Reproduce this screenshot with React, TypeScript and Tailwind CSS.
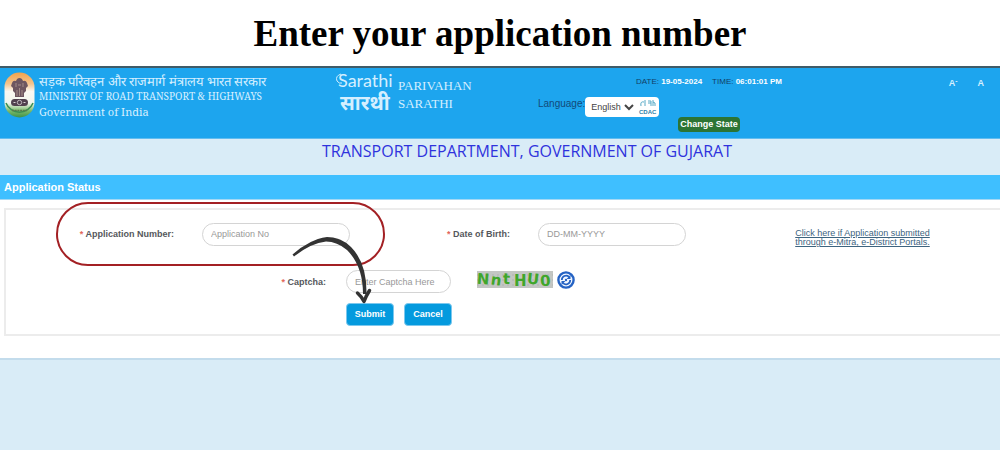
import { useState } from "react";

function Emblem() {
  return (
    <svg viewBox="0 0 31 46" className="h-[46px] w-[31px] shrink-0" aria-label="Emblem of India">
      <defs>
        <linearGradient id="tricolour" x1="0" y1="0" x2="0" y2="1">
          <stop offset="0" stopColor="#f2a24a" />
          <stop offset="0.25" stopColor="#f3c48e" />
          <stop offset="0.42" stopColor="#fbf8f2" />
          <stop offset="0.68" stopColor="#f1f6ee" />
          <stop offset="0.85" stopColor="#7dbb6b" />
          <stop offset="1" stopColor="#3f9148" />
        </linearGradient>
      </defs>
      <rect x="0.5" y="0.5" width="30" height="45" rx="15" fill="url(#tricolour)" />
      <path d="M2 31 A14.5 14.5 0 0 0 29 31" fill="none" stroke="#3c8f52" strokeWidth="1.5" />
      {/* lions */}
      <path
        d="M8 11 Q9 8 12 9 Q13 6 15.500 6 Q18 6 19 9 Q22 8 23 11 L24 14 L22 16 L22 19 L20 21 L20 25 L11 25 L11 21 L9 19 L9 16 L7 14 Z"
        fill="#6d5660"
      />
      <path d="M12 11 v4 M19 11 v4 M14 13 h3 M13 18 v6 M18 18 v6 M15.500 16 v8" stroke="#b39a93" strokeWidth="0.800" />
      {/* abacus and wheel */}
      <rect x="7" y="27" width="17" height="7" rx="3.500" fill="#51414f" />
      <circle cx="15.500" cy="30.500" r="2.200" fill="none" stroke="#d9d2d6" strokeWidth="0.800" />
      <path d="M9.500 30.500 h2 M19.500 30.500 h2" stroke="#d9d2d6" strokeWidth="1" />
      <path d="M8 38.500 h15" stroke="#5c7a4c" strokeWidth="1.500" strokeDasharray="2 0.700" />
    </svg>
  );
}

function SarathiLogo() {
  return (
    <svg viewBox="0 0 58 42" className="h-[42px] w-[58px] shrink-0 overflow-visible" fill="#d5efff">
      <text x="2" y="15" fontSize="18" fontFamily="Lato, sans-serif">
        Sarathi
      </text>
      <text x="4" y="38" fontSize="20" fontWeight="700" fontFamily="'Noto Sans', 'Noto Sans Devanagari', sans-serif">
        सारथी
      </text>
      <path d="M5 2 Q-1 4 1 9 Q3 12 6 11" fill="none" stroke="#d5efff" strokeWidth="1" />
    </svg>
  );
}

function CdacLogo() {
  return (
    <svg viewBox="0 0 18 16" className="h-4 w-[18px] overflow-visible">
      <path d="M2 7 Q1 2 5 3 M6 1 v6 M9 2 h3 v5 M9 4 h3 M14 1 v6 M14 3 q3 0 2 4" fill="none" stroke="#58aac6" strokeWidth="1" />
      <text x="0" y="15" fontSize="6" fontWeight="700" fontFamily="'Liberation Sans', sans-serif" fill="#2b7fa8">
        CDAC
      </text>
    </svg>
  );
}

const captchaGlyphs = [
  { char: "N", x: 0, y: 13, turn: 4 },
  { char: "n", x: 14, y: 14, turn: 8 },
  { char: "t", x: 26, y: 13, turn: 2 },
  { char: "H", x: 37, y: 15, turn: 0 },
  { char: "U", x: 50, y: 13, turn: 6 },
  { char: "0", x: 63, y: 15, turn: -4 },
];

function CaptchaImage() {
  return (
    <svg viewBox="0 0 76 17" className="h-[17px] w-[76px] shrink-0 overflow-visible">
      <rect width="76" height="17" fill="#c3c6c3" />
      <path d="M0 4 H76 M0 9 H76 M0 14 H76" stroke="#afb3af" strokeWidth="1" strokeDasharray="2 3" />
      {captchaGlyphs.map((g) => (
        <text
          key={g.x}
          x={g.x}
          y={g.y}
          transform={`rotate(${g.turn} ${g.x + 5} ${g.y - 6})`}
          fontSize="15"
          fontWeight="700"
          fontFamily="'DejaVu Sans', sans-serif"
          fill="#3fa62b"
        >
          {g.char}
        </text>
      ))}
    </svg>
  );
}

function RefreshIcon() {
  return (
    <svg viewBox="0 0 18 18" className="size-[18px]">
      <circle cx="9" cy="9" r="7.600" fill="#f3f8ff" stroke="#2563c4" strokeWidth="2.400" />
      <path d="M4.800 9 A4.300 4.300 0 0 1 12 5.800 M13.200 9 A4.300 4.300 0 0 1 6 12.200" fill="none" stroke="#2563c4" strokeWidth="1.800" />
      <path d="M13.500 3.800 V8 H9.600 Z M4.500 14.200 V10 H8.400 Z" fill="#2563c4" />
      <circle cx="9" cy="9" r="1.200" fill="#2563c4" />
    </svg>
  );
}

function Arrow() {
  return (
    <svg viewBox="0 0 84 72" className="pointer-events-none absolute top-6 left-[284px] h-[72px] w-[84px]">
      <path
        d="M2.500 20.500 Q20 5 37 3 Q51 3 61 13 Q77 29 76.500 60 L73 60 Q73 32 57 16 Q47 7.500 36 7.500 Q21 9 4 22.500 Z"
        fill="#333333"
      />
      <path d="M67.500 59 Q71 62 74 67.500 Q76 62 79.500 56.500" fill="none" stroke="#333333" strokeWidth="3.500" strokeLinecap="round" strokeLinejoin="round" />
    </svg>
  );
}

function FieldLabel({ htmlFor, children }: { htmlFor: string; children: string }) {
  return (
    <label htmlFor={htmlFor} className="text-right text-[9px] leading-4 font-bold whitespace-nowrap text-[#55575c]">
      <span className="text-[#e2665a]">* </span>
      {children}
    </label>
  );
}

const fieldClass =
  "h-[23px] rounded-full border border-[#d4d4d4] bg-white px-2 text-[9px] text-gray-700 placeholder-[#999999] focus:outline-none";
const buttonClass =
  "h-[23px] w-12 rounded-sm border border-[#7cc8ee] bg-[#049ade] text-[9px] font-bold text-white";

export default function App() {
  const [applicationNo, setApplicationNo] = useState("");
  const [birthDate, setBirthDate] = useState("");
  const [captcha, setCaptcha] = useState("");

  return (
    <div className="min-h-screen bg-[#d9ecf7] font-['Liberation_Sans',Arial,sans-serif]">
      <h1 className="bg-white pt-[10px] pb-2 text-center font-['Liberation_Serif',serif] text-[37px] leading-[48px] font-bold text-black">
        Enter your application number
      </h1>

      <header className="grid h-[73px] grid-cols-[33%_20%_1fr_auto] border-t-2 border-b border-t-[#3f5b68] border-b-[#62bdf0] bg-[#1da5ee]">
        <div className="flex items-start gap-1 pt-1 pl-1">
          <Emblem />
          <div className="pt-[2px] font-['Noto_Serif','Liberation_Serif',serif] leading-[15px] whitespace-nowrap text-[#d5efff]">
            <p className="text-[13px]">सड़क परिवहन और राजमार्ग मंत्रालय भारत सरकार</p>
            <p className="text-[10px]">MINISTRY OF ROAD TRANSPORT &amp; HIGHWAYS</p>
            <p className="text-[11px]">Government of India</p>
          </div>
        </div>

        <div className="flex items-start gap-1 pt-1 pl-[6px]">
          <SarathiLogo />
          <div className="pt-[5px] font-['Liberation_Serif',serif] text-[13px] leading-[18px] text-[#d5efff]">
            <p>PARIVAHAN</p>
            <p>SARATHI</p>
          </div>
        </div>

        <div className="pt-2 pl-2">
          <p className="flex gap-[10px] pl-[98px] text-[8px] leading-3 whitespace-nowrap text-[#123f66]">
            <span>
              DATE: <b className="font-bold text-white">19-05-2024</b>
            </span>
            <span>
              TIME: <b className="font-bold text-white">06:01:01 PM</b>
            </span>
          </p>
          <div className="mt-[9px] flex items-start">
            <label htmlFor="language" className="text-[10px] leading-[14px] text-[#124a78]">
              Language:
            </label>
            <span className="flex h-5 items-center gap-[2px] rounded-sm bg-white px-[2px]">
              <select id="language" className="h-4 w-[50px] bg-white text-[9px] text-[#444444]">
                <option>English</option>
                <option>हिन्दी</option>
              </select>
              <CdacLogo />
            </span>
          </div>
          <button className="ml-[140px] block h-[15px] w-[62px] rounded-sm bg-[#2c7434] text-[9px] leading-[15px] font-bold text-white">
            Change State
          </button>
        </div>

        <div className="flex gap-5 pt-2 pr-4 text-[9px] leading-[14px] font-bold text-[#d5efff]">
          <button className="self-start">
            A<sup>-</sup>
          </button>
          <button className="self-start">A</button>
        </div>
      </header>

      <h2 className="h-9 pl-[54px] text-center font-['Open_Sans',sans-serif] text-base leading-6 text-[#2f33dd]">
        TRANSPORT DEPARTMENT, GOVERNMENT OF GUJARAT
      </h2>

      <main className="border-b-2 border-[#c3dcec] bg-white pb-[22px]">
        <h3 className="border-b border-[#a4d8f4] bg-[#3fbfff] pl-1 text-[11px] leading-6 font-bold text-white">
          Application Status
        </h3>

        <form
          className="relative mt-2 ml-1 flex h-32 flex-col border-2 border-r-0 border-[#ececec] pt-[11px]"
          onSubmit={(e) => e.preventDefault()}
        >
          <div className="grid grid-cols-[168px_175px_161px_175px_1fr] items-center">
            <FieldLabel htmlFor="application-no">Application Number:</FieldLabel>
            <input
              id="application-no"
              value={applicationNo}
              onChange={(e) => setApplicationNo(e.target.value)}
              placeholder="Application No"
              className={`${fieldClass} ml-7 w-[148px]`}
            />
            <FieldLabel htmlFor="birth-date">Date of Birth:</FieldLabel>
            <input
              id="birth-date"
              value={birthDate}
              onChange={(e) => setBirthDate(e.target.value)}
              placeholder="DD-MM-YYYY"
              className={`${fieldClass} ml-7 w-[148px]`}
            />
            <a href="#portals" className="justify-self-center pt-2 pl-10 text-center text-[9px] leading-[9px] text-[#3d6480] underline">
              Click here if Application submitted
              <br />
              through e-Mitra, e-District Portals.
            </a>
          </div>

          <div className="mt-[23px] flex items-center">
            <span className="flex w-80 justify-end">
              <FieldLabel htmlFor="captcha">Captcha:</FieldLabel>
            </span>
            <input
              id="captcha"
              value={captcha}
              onChange={(e) => setCaptcha(e.target.value)}
              placeholder="Enter Captcha Here"
              className={`${fieldClass} mr-[26px] ml-5 w-[105px]`}
            />
            <span className="flex items-center gap-1 pb-1">
              <CaptchaImage />
              <button type="button" aria-label="Refresh captcha">
                <RefreshIcon />
              </button>
            </span>
          </div>

          <div className="mt-[10px] flex gap-[10px] pl-[340px]">
            <button type="submit" className={buttonClass}>
              Submit
            </button>
            <button type="button" className={buttonClass}>
              Cancel
            </button>
          </div>

          {/* highlight around the application number */}
          <div className="pointer-events-none absolute -top-2 left-[50px] h-16 w-[329px] rounded-full border-2 border-[#a32024]" />
          <Arrow />
        </form>
      </main>
    </div>
  );
}
